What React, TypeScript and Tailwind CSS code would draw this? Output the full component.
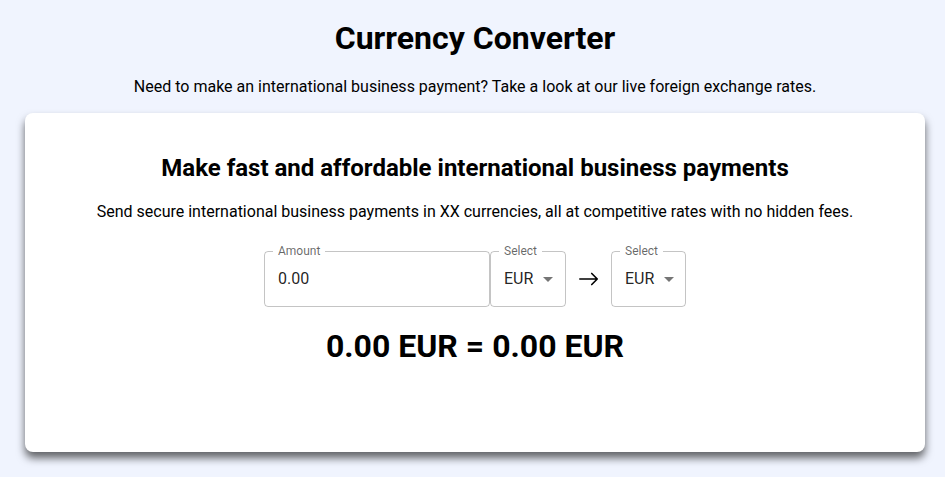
function Outlined({ label, width, children, select }: { label: string; width: string; children: React.ReactNode; select?: boolean }) {
  return (
    <div className={`relative h-[56px] ${width} rounded-[4px] border border-[rgba(0,0,0,0.23)] flex items-center pl-[13px] text-[16px] text-[rgba(0,0,0,0.87)]`}>
      <span className="absolute -top-[9px] left-[8px] bg-white px-[5px] text-[12px] leading-[16px] text-[rgba(0,0,0,0.6)]">
        {label}
      </span>
      <span>{children}</span>
      {select && (
        <svg className="ml-[10px] w-[10px] h-[5px]" viewBox="0 0 10 5">
          <path d="M0 0l5 5 5-5z" fill="rgba(0,0,0,0.54)" />
        </svg>
      )}
    </div>
  );
}

export default function App() {
  return (
    <div className="min-h-screen bg-[#f0f4fe] font-['Roboto',sans-serif] text-black">
      <div className="w-[900px] ml-[25px] pt-[14px] flex flex-col items-center">
        {/* Header */}
        <h1 className="text-[32px] leading-[48px] font-bold">Currency Converter</h1>
        <p className="mt-[13px] text-[16px] leading-[24px]">
          Need to make an international business payment? Take a look at our live foreign exchange rates.
        </p>

        {/* Card */}
        <div className="mt-[14px] w-full h-[339px] bg-white rounded-[8px] shadow-[0_6px_8px_rgba(0,0,0,0.6)] flex flex-col items-center pt-[39px]">
          <h2 className="text-[24px] leading-[32px] font-bold">
            Make fast and affordable international business payments
          </h2>
          <p className="mt-[16px] text-[16px] leading-[24px]">
            Send secure international business payments in XX currencies, all at competitive rates with no hidden fees.
          </p>

          <div className="mt-[27px] flex items-center">
            <Outlined label="Amount" width="w-[226px]">0.00</Outlined>
            <Outlined label="Select" width="w-[76px]" select>EUR</Outlined>
            <div className="w-[45px] flex justify-center">
              <svg width="22" height="22" viewBox="0 0 24 24" fill="none" stroke="black" strokeWidth={1.8} strokeLinecap="round" strokeLinejoin="round">
                <path d="M2 12h19M15 6l6 6-6 6" />
              </svg>
            </div>
            <Outlined label="Select" width="w-[75px]" select>EUR</Outlined>
          </div>

          <div className="mt-[20px] text-[32px] leading-[38px] font-bold">0.00 EUR = 0.00 EUR</div>
        </div>
      </div>
    </div>
  );
}
